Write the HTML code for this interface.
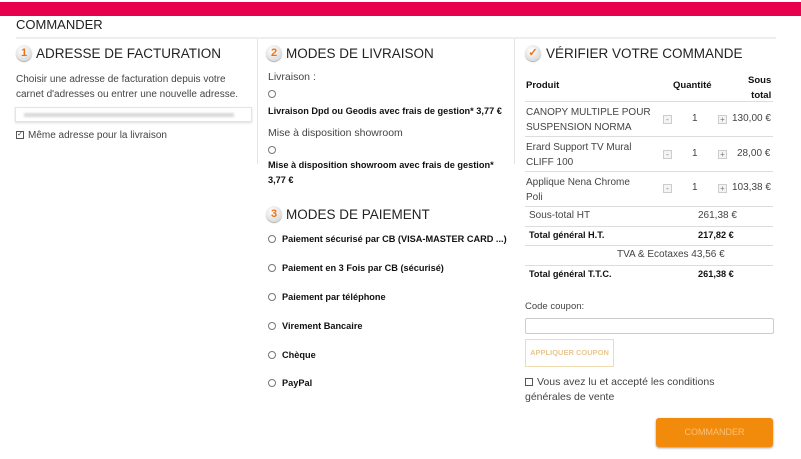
<!DOCTYPE html>
<html><head><meta charset="utf-8"><style>
*{margin:0;padding:0;box-sizing:border-box}
body{width:801px;height:459px;background:#fff;font-family:"Liberation Sans",sans-serif;color:#333;position:relative;overflow:hidden}
.a{position:absolute;white-space:nowrap}
.h{font-size:13.5px;color:#222}
.t{font-size:10px;color:#444}
.b{font-size:9.2px;font-weight:bold;color:#111}
.ic{position:absolute;width:16px;height:16px;border-radius:50%;background:radial-gradient(circle at 40% 35%,#fff,#ddd 70%,#bbb);box-shadow:0 1px 1px #aaa;color:#f07010;font-weight:bold;font-size:11px;text-align:center;line-height:16px}
.r{position:absolute;width:8px;height:8px;border:1px solid #777;border-radius:50%}
.hl{position:absolute;height:1px;background:#ddd}
.pm{position:absolute;width:9px;height:9px;border:1px solid #ccc;background:#f4f4f4;font-size:8px;line-height:7px;text-align:center;color:#777}
</style></head><body>
<div class="a" style="left:0;top:2px;width:801px;height:14px;background:#e8004f"></div>
<div class="a" style="left:16px;top:17px;font-size:13px;color:#222">COMMANDER</div>
<div class="hl" style="left:16px;top:37px;width:760px;height:2px;background:#eee"></div>
<div class="a" style="left:257px;top:39px;width:1px;height:125px;background:#e4e4e4"></div>
<div class="a" style="left:514px;top:39px;width:1px;height:125px;background:#e4e4e4"></div>

<div class="ic" style="left:16px;top:45px">1</div>
<div class="a h" style="left:36px;top:46px">ADRESSE DE FACTURATION</div>
<div class="a t" style="left:16px;top:72px;line-height:15px">Choisir une adresse de facturation depuis votre<br>carnet d'adresses ou entrer une nouvelle adresse.</div>
<div class="a" style="left:15px;top:107px;width:237px;height:15px;border:1px solid #e4e4e4;box-shadow:0 1px 2px #ddd"><div style="margin:5px 8px;height:4px;background:#d8d8d8;width:210px;filter:blur(1px)"></div></div>
<div class="a" style="left:16px;top:131px;width:8px;height:8px;border:1px solid #555;font-size:7px;line-height:6px;text-align:center">✓</div>
<div class="a t" style="left:28px;top:130px">Même adresse pour la livraison</div>

<div class="ic" style="left:266px;top:45px">2</div>
<div class="a h" style="left:286px;top:46px">MODES DE LIVRAISON</div>
<div class="a t" style="left:268px;top:71px;font-size:10.5px">Livraison :</div>
<div class="r" style="left:268px;top:90px"></div>
<div class="a b" style="left:268px;top:106px">Livraison Dpd ou Geodis avec frais de gestion* 3,77 €</div>
<div class="a t" style="left:268px;top:127px;font-size:10.5px">Mise à disposition showroom</div>
<div class="r" style="left:268px;top:146px"></div>
<div class="a b" style="left:268px;top:158px;line-height:15px">Mise à disposition showroom avec frais de gestion*<br>3,77 €</div>

<div class="ic" style="left:266px;top:206px">3</div>
<div class="a h" style="left:286px;top:207px">MODES DE PAIEMENT</div>
<div class="r" style="left:268px;top:235px"></div><div class="a b" style="left:282px;top:234px">Paiement sécurisé par CB (VISA-MASTER CARD ...)</div>
<div class="r" style="left:268px;top:264px"></div><div class="a b" style="left:282px;top:263px">Paiement en 3 Fois par CB (sécurisé)</div>
<div class="r" style="left:268px;top:293px"></div><div class="a b" style="left:282px;top:292px">Paiement par téléphone</div>
<div class="r" style="left:268px;top:322px"></div><div class="a b" style="left:282px;top:321px">Virement Bancaire</div>
<div class="r" style="left:268px;top:351px"></div><div class="a b" style="left:282px;top:350px">Chèque</div>
<div class="r" style="left:268px;top:379px"></div><div class="a b" style="left:282px;top:378px">PayPal</div>

<div class="ic" style="left:525px;top:45px">✓</div>
<div class="a h" style="left:546px;top:46px">VÉRIFIER VOTRE COMMANDE</div>
<div class="a b" style="left:526px;top:80px;font-size:9.5px">Produit</div>
<div class="a b" style="left:673px;top:80px;font-size:9.5px">Quantité</div>
<div class="a b" style="left:748px;top:73px;text-align:right;line-height:15px;font-size:9.5px">Sous<br>total</div>
<div class="hl" style="left:525px;top:101px;width:248px"></div>
<div class="a t" style="left:526px;top:105px;line-height:15px;font-size:10px">CANOPY MULTIPLE POUR<br>SUSPENSION NORMA</div>
<div class="pm" style="left:663px;top:115px">-</div><div class="a t" style="left:692px;top:113px">1</div><div class="pm" style="left:718px;top:115px">+</div><div class="a t" style="left:732px;top:113px">130,00 €</div>
<div class="hl" style="left:525px;top:136px;width:248px"></div>
<div class="a t" style="left:526px;top:140px;line-height:15px">Erard Support TV Mural<br>CLIFF 100</div>
<div class="pm" style="left:663px;top:150px">-</div><div class="a t" style="left:692px;top:148px">1</div><div class="pm" style="left:718px;top:150px">+</div><div class="a t" style="left:737px;top:148px">28,00 €</div>
<div class="hl" style="left:525px;top:171px;width:248px"></div>
<div class="a t" style="left:526px;top:175px;line-height:15px">Applique Nena Chrome<br>Poli</div>
<div class="pm" style="left:663px;top:184px">-</div><div class="a t" style="left:692px;top:182px">1</div><div class="pm" style="left:718px;top:184px">+</div><div class="a t" style="left:732px;top:182px">103,38 €</div>
<div class="hl" style="left:525px;top:206px;width:248px"></div>
<div class="a t" style="left:529px;top:210px">Sous-total HT</div><div class="a t" style="left:698px;top:210px">261,38 €</div>
<div class="hl" style="left:525px;top:226px;width:248px"></div>
<div class="a b" style="left:529px;top:230px">Total général H.T.</div><div class="a b" style="left:698px;top:230px">217,82 €</div>
<div class="hl" style="left:525px;top:245px;width:248px"></div>
<div class="a t" style="left:617px;top:249px">TVA &amp; Ecotaxes 43,56 €</div>
<div class="hl" style="left:525px;top:265px;width:248px"></div>
<div class="a b" style="left:529px;top:269px">Total général T.T.C.</div><div class="a b" style="left:698px;top:269px">261,38 €</div>
<div class="a t" style="left:525px;top:301px;font-size:9.5px">Code coupon:</div>
<div class="a" style="left:525px;top:318px;width:249px;height:16px;border:1px solid #ccc;border-radius:2px"></div>
<div class="a" style="left:525px;top:339px;width:89px;height:28px;border:1px solid #f0dcb0;color:#e8c890;font-size:7.5px;font-weight:bold;text-align:center;line-height:26px">APPLIQUER COUPON</div>
<div class="a" style="left:525px;top:378px;width:8px;height:8px;border:1px solid #555"></div>
<div class="a t" style="left:537px;top:376px;font-size:10.5px">Vous avez lu et accepté les conditions</div>
<div class="a t" style="left:525px;top:391px;font-size:10.5px">générales de vente</div>
<div class="a" style="left:656px;top:418px;width:117px;height:29px;background:#f28a0c;border-radius:3px;box-shadow:0 1px 2px #999;color:#f7c27a;font-size:9px;text-align:center;line-height:29px">COMMANDER</div>
</body></html>
